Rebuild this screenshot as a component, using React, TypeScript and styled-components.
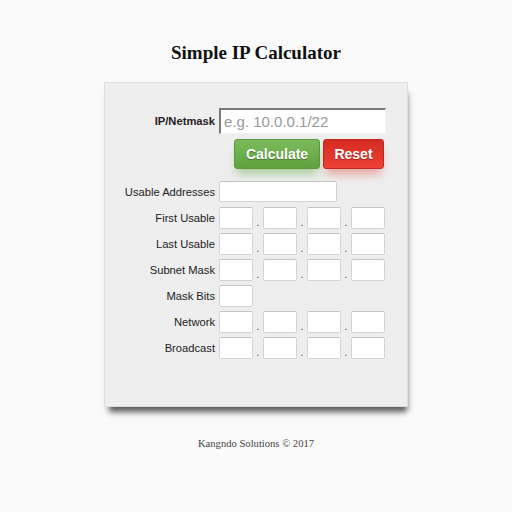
import { createGlobalStyle, styled } from 'styled-components'

const GlobalStyle = createGlobalStyle`
  html, body {
    margin: 0;
    padding: 0;
    background-color: #fafafa;
  }
`

const Page = styled.div`
  display: flex;
  flex-direction: column;
  align-items: center;
  padding-top: 42px;
`

const Title = styled.h2`
  margin: 0;
  font-family: 'Liberation Serif', 'Times New Roman', serif;
  font-size: 19px;
  line-height: 22px;
  font-weight: bold;
  color: #111;
`

const Card = styled.div`
  box-sizing: border-box;
  width: 304px;
  height: 325px;
  margin-top: 18px;
  padding-top: 25px;
  background-color: #eeeeee;
  border: 1px solid #dcdcdc;
  box-shadow: 2px 8px 6px -3px rgba(0, 0, 0, 0.65);
  display: flex;
  flex-direction: column;
  font-family: 'Liberation Sans', Arial, sans-serif;
`

const Row = styled.div<{ $mt?: number }>`
  display: flex;
  align-items: center;
  margin-top: ${(p) => p.$mt ?? 0}px;
`

const Label = styled.label<{ $bold?: boolean }>`
  box-sizing: border-box;
  width: 114px;
  padding-right: 4px;
  text-align: right;
  font-size: 11.2px;
  font-weight: ${(p) => (p.$bold ? 'bold' : 'normal')};
  color: #222;
`

const IpInput = styled.input`
  box-sizing: border-box;
  width: 167px;
  height: 26px;
  padding: 0 3px;
  border-style: solid;
  border-width: 2px 1px 1px 2px;
  border-color: #7a7a7a #f4f4f4 #f4f4f4 #7a7a7a;
  background: #fff;
  font-family: 'Liberation Sans', Arial, sans-serif;
  font-size: 15px;
  outline: none;
  &::placeholder {
    color: #999;
  }
`

const ButtonRow = styled.div`
  display: flex;
  justify-content: flex-end;
  gap: 3px;
  width: 279px;
  margin-top: 5px;
`

const Button = styled.button<{ $kind: 'go' | 'stop'; $w: number }>`
  box-sizing: border-box;
  width: ${(p) => p.$w}px;
  height: 30px;
  padding: 0;
  border-radius: 3px;
  border: 1px solid ${(p) => (p.$kind === 'go' ? '#5a9a3a' : '#c0281e')};
  background: ${(p) =>
    p.$kind === 'go'
      ? 'linear-gradient(#7cbb5c, #5fa23e)'
      : 'linear-gradient(#d42b22, #ee4136)'};
  box-shadow: 0 8px 10px -3px
    ${(p) => (p.$kind === 'go' ? 'rgba(90, 160, 60, 0.45)' : 'rgba(210, 50, 40, 0.4)')};
  color: #fff;
  font-family: 'Liberation Sans', Arial, sans-serif;
  font-size: 14px;
  font-weight: bold;
  text-shadow: 0 1px 1px rgba(0, 0, 0, 0.35);
  cursor: pointer;
`

const Field = styled.input<{ $w: number; $h?: number }>`
  box-sizing: border-box;
  width: ${(p) => p.$w}px;
  height: ${(p) => p.$h ?? 22}px;
  border: 1px solid #d4d4d4;
  border-top-color: #c4c4c4;
  border-radius: 2px;
  background: #fff;
  outline: none;
`

const Dot = styled.span`
  width: 10px;
  align-self: flex-end;
  text-align: center;
  font-size: 10px;
  line-height: 10px;
  color: #880088;
  padding-bottom: 1px;
`

const Footer = styled.div`
  margin-top: 30px;
  font-family: 'Liberation Serif', 'Times New Roman', serif;
  font-size: 10.6px;
  line-height: 14px;
  color: #444;
`

function OctetRow(props: { label: string; mt: number }) {
  const { label, mt } = props
  return (
    <Row $mt={mt}>
      <Label>{label}</Label>
      <Field $w={34} />
      <Dot>.</Dot>
      <Field $w={34} />
      <Dot>.</Dot>
      <Field $w={34} />
      <Dot>.</Dot>
      <Field $w={34} />
    </Row>
  )
}

function App() {
  return (
    <>
      <GlobalStyle />
      <Page>
        <Title>Simple IP Calculator</Title>
        <Card>
          <Row>
            <Label $bold>IP/Netmask</Label>
            <IpInput placeholder="e.g. 10.0.0.1/22" />
          </Row>
          <ButtonRow>
            <Button $kind="go" $w={86}>Calculate</Button>
            <Button $kind="stop" $w={61}>Reset</Button>
          </ButtonRow>
          <Row $mt={12}>
            <Label>Usable Addresses</Label>
            <Field $w={118} $h={21} />
          </Row>
          <OctetRow label="First Usable" mt={5} />
          <OctetRow label="Last Usable" mt={4} />
          <OctetRow label="Subnet Mask" mt={4} />
          <Row $mt={4}>
            <Label>Mask Bits</Label>
            <Field $w={34} />
          </Row>
          <OctetRow label="Network" mt={4} />
          <OctetRow label="Broadcast" mt={4} />
        </Card>
        <Footer>Kangndo Solutions © 2017</Footer>
      </Page>
    </>
  )
}

export default App
